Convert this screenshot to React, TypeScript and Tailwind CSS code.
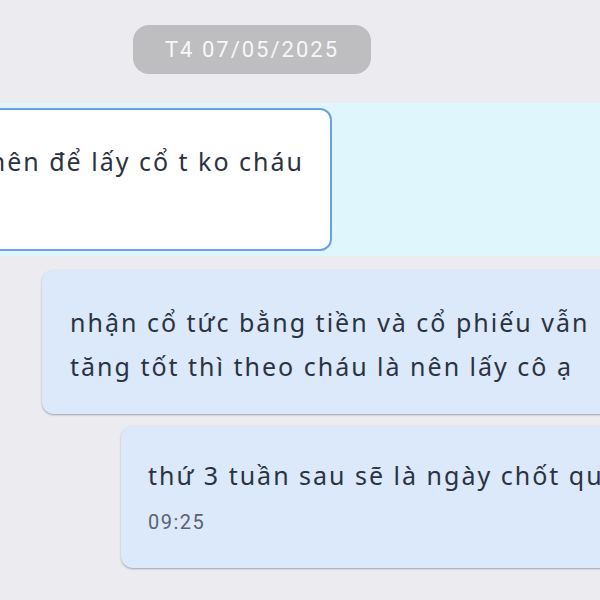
export default function App() {
  const msg = "text-[25px] leading-[44px] tracking-[2px] text-[#2c3340] whitespace-nowrap";
  return (
    <div className="w-[600px] h-[600px] overflow-hidden bg-[#ecebef] flex flex-col" style={{ fontFamily: '"Noto Sans", sans-serif' }}>
      <div className="h-[25px] shrink-0" />
      <div className="flex justify-start pl-[133px] shrink-0">
        <div className="h-[49px] w-[238px] rounded-[16px] bg-[#bebdc0] flex items-center justify-center text-[#f7f7f7] text-[22px] tracking-[2px]" style={{ fontFamily: 'Roboto, sans-serif' }}>
          T4 07/05/2025
        </div>
      </div>
      <div className="h-[29px] shrink-0" />
      <div className="h-[153px] shrink-0 bg-[#dff6fd] pt-[5px]">
        <div className="ml-[-200px] w-[532px] h-[143px] bg-white border-2 border-[#6d9fe9] rounded-[12px] flex justify-end pr-[26px] pt-[29px]">
          <div className={msg}>nên để lấy cổ t ko cháu</div>
        </div>
      </div>
      <div className="h-[14px] shrink-0" />
      <div className="ml-[42px] w-[600px] h-[144px] shrink-0 bg-[#dbe9fa] rounded-[12px] shadow-[0_1px_2px_rgba(60,70,90,0.45)] pl-[28px] pt-[30px]">
        <div className={msg}>nhận cổ tức bằng tiền và cổ phiếu vẫn</div>
        <div className={msg}>tăng tốt thì theo cháu là nên lấy cô ạ</div>
      </div>
      <div className="h-[12px] shrink-0" />
      <div className="ml-[121px] w-[600px] h-[142px] shrink-0 bg-[#dbe9fa] rounded-[12px] shadow-[0_1px_2px_rgba(60,70,90,0.45)] pl-[27px] pt-[27px]">
        <div className={msg}>thứ 3 tuần sau sẽ là ngày chốt quyền</div>
        <div className="mt-[13px] text-[20px] leading-[24px] tracking-[1.5px] text-[#5b6270]" style={{ fontFamily: 'Roboto, sans-serif' }}>09:25</div>
      </div>
    </div>
  );
}
